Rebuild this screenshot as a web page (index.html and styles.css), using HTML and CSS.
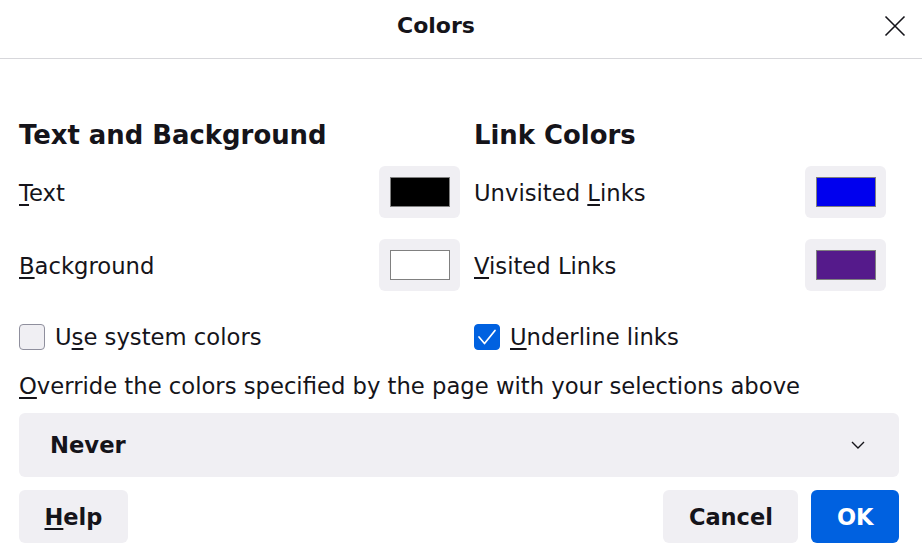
FILE: index.html
```html
<!DOCTYPE html>
<html lang="en">
<head>
<meta charset="utf-8">
<title>Colors</title>
<link rel="stylesheet" href="styles.css">
</head>
<body>
<div class="dialog">
  <header class="titlebar">
    <h1 class="title">Colors</h1>
    <button class="close" aria-label="Close">
      <svg width="22" height="22" viewBox="0 0 22 22"><path d="M1.5 1.5 L20.5 20.5 M20.5 1.5 L1.5 20.5" stroke="#15141a" stroke-width="1.6" fill="none"/></svg>
    </button>
  </header>
  <main class="content">
    <div class="columns">
      <section class="col col-left">
        <h2 class="heading">Text and Background</h2>
        <div class="row">
          <span class="label"><u>T</u>ext</span>
          <button class="swatch-btn"><span class="swatch sw-black"></span></button>
        </div>
        <div class="row">
          <span class="label"><u>B</u>ackground</span>
          <button class="swatch-btn"><span class="swatch sw-white"></span></button>
        </div>
        <label class="check">
          <span class="box"></span>
          <span>U<u>s</u>e system colors</span>
        </label>
      </section>
      <section class="col col-right">
        <h2 class="heading">Link Colors</h2>
        <div class="row">
          <span class="label">Unvisited <u>L</u>inks</span>
          <button class="swatch-btn"><span class="swatch sw-blue"></span></button>
        </div>
        <div class="row">
          <span class="label"><u>V</u>isited Links</span>
          <button class="swatch-btn"><span class="swatch sw-purple"></span></button>
        </div>
        <label class="check">
          <span class="box checked">
            <svg width="26" height="26" viewBox="0 0 26 26"><path d="M5 13 L10.5 19.5 L21 6.5" stroke="#fff" stroke-width="1.7" fill="none" stroke-linecap="round" stroke-linejoin="round"/></svg>
          </span>
          <span><u>U</u>nderline links</span>
        </label>
      </section>
    </div>
    <p class="override"><u>O</u>verride the colors specified by the page with your selections above</p>
    <div class="select">
      <span class="select-value">Never</span>
      <svg class="chev" width="14" height="8" viewBox="0 0 14 8"><path d="M1 1 L7 7 L13 1" stroke="#15141a" stroke-width="1.4" fill="none"/></svg>
    </div>
    <div class="buttons">
      <button class="btn"><u>H</u>elp</button>
      <span class="spacer"></span>
      <button class="btn">Cancel</button>
      <button class="btn primary">OK</button>
    </div>
  </main>
</div>
</body>
</html>
```
FILE: styles.css
```css
* { box-sizing: border-box; }
html, body {
  margin: 0;
  padding: 0;
  background: #ffffff;
}
body {
  font-family: "DejaVu Sans", sans-serif;
  font-size: 22.7px;
  color: #15141a;
  width: 922px;
  height: 559px;
  overflow: hidden;
}
button {
  font-family: inherit;
  color: inherit;
  border: none;
  margin: 0;
  padding: 0;
}
u { text-decoration-thickness: 2px; text-underline-offset: 3px; }

.titlebar {
  height: 59px;
  border-bottom: 1px solid #d7d7db;
  display: flex;
  align-items: center;
}
.title {
  flex: 1;
  text-align: center;
  margin: 0;
  font-size: 22px;
  font-weight: bold;
  line-height: 1;
  padding-bottom: 6px;
}
.close {
  flex: none;
  background: transparent;
  width: 22px;
  height: 22px;
  margin: 0 16px 6px 12px;
  display: flex;
}

.content {
  padding: 0 23px 0 19px;
}
.columns {
  display: flex;
  gap: 14px;
  margin-top: 61px;
}
.col-left { width: 441px; }
.col-right { width: 412px; }
.heading {
  margin: 0 0 16px 0;
  font-size: 25.9px;
  font-weight: bold;
  line-height: 30px;
}
.row {
  display: flex;
  align-items: center;
  justify-content: space-between;
  height: 52px;
  margin-bottom: 21px;
}
.label { line-height: 27px; padding-top: 2px; }
.swatch-btn {
  width: 81px;
  height: 52px;
  border-radius: 6px;
  background: #f0eff3;
  display: flex;
  align-items: center;
  justify-content: center;
}
.swatch {
  display: block;
  width: 60px;
  height: 30px;
  border: 1px solid #808080;
}
.sw-black { background: #000000; }
.sw-white { background: #ffffff; }
.sw-blue { background: #0000ee; }
.sw-purple { background: #551a8b; }

.check {
  display: flex;
  align-items: center;
  gap: 10px;
  height: 26px;
  margin-top: 33px;
  line-height: 27px;
}
.box {
  width: 26px;
  height: 26px;
  border-radius: 4px;
  border: 1px solid #8f8f9d;
  background: #f0eff3;
  flex: none;
}
.box.checked {
  background: #0061e0;
  border-color: #0061e0;
  display: flex;
}
.box.checked svg { margin: -1px; }

.override {
  margin: 23px 0 13px 0;
  line-height: 27px;
}
.select {
  height: 64px;
  border-radius: 6px;
  background: #f0eff3;
  display: flex;
  align-items: center;
  justify-content: space-between;
  padding: 0 34px 0 31px;
}
.select-value { font-weight: bold; }
.chev { display: block; }

.buttons {
  display: flex;
  gap: 13px;
  margin-top: 13px;
}
.spacer { flex: 1; }
.btn {
  height: 53px;
  padding: 0 25.5px;
  border-radius: 6px;
  background: #f0eff3;
  font-size: 22.5px;
  font-weight: bold;
}
.btn.primary {
  background: #0061e0;
  color: #ffffff;
}
```
